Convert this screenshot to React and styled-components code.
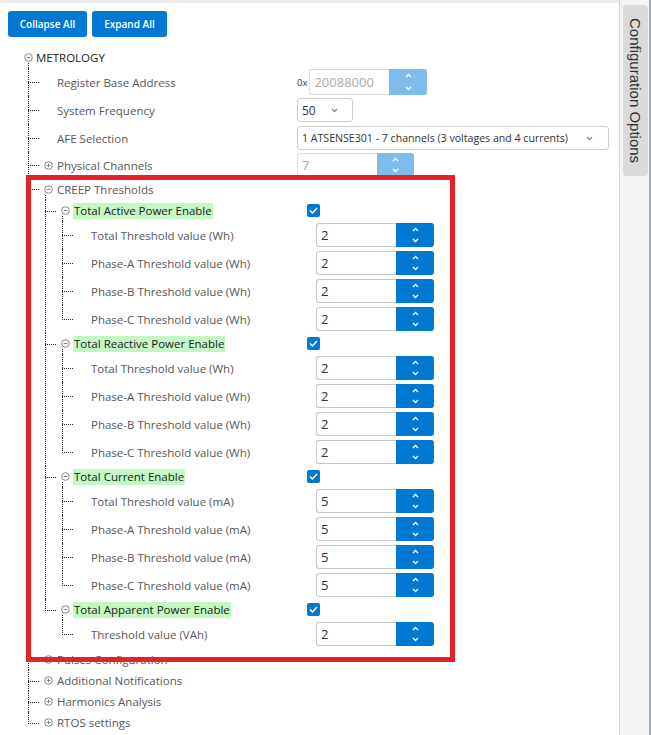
import React from "react";
import styled, { createGlobalStyle } from "styled-components";

const GlobalStyle = createGlobalStyle`
  html, body {
    margin: 0;
    padding: 0;
    height: 100%;
    overflow: hidden;
    background: #fff;
  }
  body {
    font-family: "Open Sans", "Noto Sans", sans-serif;
  }
  * {
    box-sizing: border-box;
  }
`;

const Page = styled.div`
  position: relative;
  display: flex;
  width: 651px;
  height: 735px;
`;

const Main = styled.div`
  flex: 1;
  border-top: 3px solid #ececec;
  padding: 8px 0 0 8px;
`;

const Toolbar = styled.div`
  display: flex;
  gap: 5px;
`;

const ToolButton = styled.button`
  width: ${(p) => p.$w}px;
  height: 26px;
  border: none;
  border-radius: 3px;
  background-color: #0078d4;
  color: #fff;
  font-family: "Open Sans", sans-serif;
  font-size: 10px;
  font-weight: 600;
  padding: 0;
`;

const SidePanel = styled.div`
  width: 32px;
  flex: none;
  background-color: #f4f4f4;
  border-left: 1px solid #d6d6d6;
  border-right: 2px solid #9db2c7;
  padding: 5px 0 0 3px;
`;

const SideTab = styled.div`
  width: 25px;
  height: 171px;
  border-radius: 4px;
  background-color: #dadada;
  writing-mode: vertical-rl;
  display: flex;
  align-items: center;
  justify-content: center;
  font-family: "Liberation Sans", Arial, sans-serif;
  font-size: 15px;
  color: #333;
`;

const Tree = styled.div`
  margin-top: 9px;
  padding-left: 16px;
`;

const RootRow = styled.div`
  display: flex;
  align-items: center;
  gap: 3px;
  height: 22px;
  font-size: 11.5px;
  color: #1a1a1a;
`;

const Branch = styled.ul`
  position: relative;
  list-style: none;
  margin: 0 0 0 ${(p) => p.$indent}px;
  padding: 0;

  &::before {
    content: "";
    position: absolute;
    left: 0;
    top: -5px;
    height: 5px;
    border-left: 1px dotted #222;
  }
`;

const Item = styled.li`
  position: relative;

  &::before {
    content: "";
    position: absolute;
    left: 0;
    top: ${(p) => p.$h / 2}px;
    width: 11px;
    border-top: 1px dotted #222;
  }

  &::after {
    content: "";
    position: absolute;
    left: 0;
    top: 0;
    bottom: 0;
    border-left: 1px dotted #222;
  }

  &:last-child::after {
    bottom: auto;
    height: ${(p) => p.$h / 2 + 1}px;
  }
`;

const Row = styled.div`
  display: flex;
  align-items: center;
  height: ${(p) => p.$h}px;
  padding-left: 16px;
`;

const ToggleBox = styled.span`
  width: 9px;
  height: 9px;
  flex: none;
  margin-right: 4px;
  display: flex;
`;

const Label = styled.span`
  width: ${(p) => p.$w}px;
  flex: none;
  font-size: 11.5px;
  color: #575757;
  white-space: nowrap;
`;

const Highlight = styled.span`
  display: inline-block;
  background-color: #c4f7c4;
  color: #1a1a1a;
  line-height: 16px;
  padding: 0 1px;
  margin-left: -1px;
`;

const Prefix = styled.span`
  font-size: 9.5px;
  color: #333;
  margin-right: 2px;
`;

const Spin = styled.div`
  display: flex;
  height: ${(p) => p.$h}px;
`;

const Field = styled.div`
  width: ${(p) => p.$w}px;
  height: 100%;
  border: 1px solid ${(p) => (p.$disabled ? "#dcdcdc" : "#c8c8c8")};
  border-right: none;
  border-radius: 3px 0 0 3px;
  display: flex;
  align-items: center;
  padding-left: 4px;
  font-size: 13px;
  color: ${(p) => (p.$disabled ? "#aaa" : "#333")};
  background: #fff;
`;

const Arrows = styled.div`
  width: ${(p) => p.$w}px;
  height: 100%;
  border-radius: 0 3px 3px 0;
  background-color: ${(p) => (p.$disabled ? "#7fbbeb" : "#0078d4")};
  display: flex;
  flex-direction: column;
  align-items: center;
  justify-content: space-between;
  padding: 4px 0 4px;
`;

const SelectBox = styled.div`
  width: ${(p) => p.$w}px;
  height: 24px;
  border: 1px solid #cfcfcf;
  border-radius: 3px;
  display: flex;
  align-items: center;
  justify-content: space-between;
  padding: 0 ${(p) => p.$pr}px 0 4px;
  font-size: ${(p) => p.$fs}px;
  color: #333;
  white-space: nowrap;
`;

const Check = styled.span`
  width: 13px;
  height: 13px;
  border-radius: 2px;
  background-color: #0078d4;
  display: flex;
  align-items: center;
  justify-content: center;
`;

const RedFrame = styled.div`
  position: absolute;
  left: 26px;
  top: 175px;
  width: 429px;
  height: 487px;
  border: 5px solid #e52129;
  pointer-events: none;
`;

const ToggleIcon = ({ open }) => (
  <svg width="9" height="9" viewBox="0 0 9 9">
    <circle cx="4.5" cy="4.5" r="3.8" fill="none" stroke="#777" strokeWidth="0.9" />
    <line x1="2.6" y1="4.5" x2="6.4" y2="4.5" stroke="#777" strokeWidth="0.9" />
    {!open && <line x1="4.5" y1="2.6" x2="4.5" y2="6.4" stroke="#777" strokeWidth="0.9" />}
  </svg>
);

const Chevron = ({ up, color = "#fff", w = 7 }) => (
  <svg width={w} height="5" viewBox="0 0 7 5">
    <polyline
      points={up ? "1,4 3.5,1.5 6,4" : "1,1 3.5,3.5 6,1"}
      fill="none"
      stroke={color}
      strokeWidth="1.3"
    />
  </svg>
);

const NumberInput = ({ value, disabled, h = 24, fw = 80, aw = 38 }) => (
  <Spin $h={h}>
    <Field $w={fw} $disabled={disabled}>{value}</Field>
    <Arrows $w={aw} $disabled={disabled}>
      <Chevron up />
      <Chevron />
    </Arrows>
  </Spin>
);

const Control = ({ c }) => {
  if (!c) return null;
  if (c.type === "hex")
    return (
      <>
        <Prefix>0x</Prefix>
        <NumberInput value={c.value} disabled h={26} />
      </>
    );
  if (c.type === "select")
    return (
      <SelectBox $w={c.width} $pr={c.pr} $fs={c.fs}>
        <span>{c.value}</span>
        <Chevron color="#888" />
      </SelectBox>
    );
  if (c.type === "check")
    return (
      <Check>
        <svg width="9" height="7" viewBox="0 0 9 7">
          <polyline points="1,3.6 3.4,6 8,1" fill="none" stroke="#fff" strokeWidth="1.4" />
        </svg>
      </Check>
    );
  return <NumberInput value={c.value} disabled={c.disabled} aw={c.aw} />;
};

const labelWidth = (level) => [240, 233, 225][level - 1];

const group = (title, unit, value, h = 21) => ({
  label: title,
  h,
  toggle: "open",
  highlight: true,
  control: { type: "check" },
  children: [
    { label: `Total Threshold value (${unit})`, h: 28, control: { type: "number", value } },
    { label: `Phase-A Threshold value (${unit})`, h: 28, control: { type: "number", value } },
    { label: `Phase-B Threshold value (${unit})`, h: 28, control: { type: "number", value } },
    { label: `Phase-C Threshold value (${unit})`, h: 28, control: { type: "number", value } },
  ],
});

const tree = [
  { label: "Register Base Address", h: 28, control: { type: "hex", value: "20088000" } },
  { label: "System Frequency", h: 28, control: { type: "select", value: "50", width: 56, pr: 14, fs: 12 } },
  {
    label: "AFE Selection",
    h: 28,
    control: {
      type: "select",
      value: "1 ATSENSE301 - 7 channels (3 voltages and 4 currents)",
      width: 312,
      pr: 15,
      fs: 10.6,
    },
  },
  { label: "Physical Channels", h: 26, toggle: "closed", control: { type: "number", value: "7", disabled: true, aw: 37 } },
  {
    label: "CREEP Thresholds",
    h: 22,
    toggle: "open",
    children: [
      group("Total Active Power Enable", "Wh", "2"),
      group("Total Reactive Power Enable", "Wh", "2"),
      group("Total Current Enable", "mA", "5"),
      {
        label: "Total Apparent Power Enable",
        h: 21,
        toggle: "open",
        highlight: true,
        control: { type: "check" },
        children: [{ label: "Threshold value (VAh)", h: 28, control: { type: "number", value: "2" } }],
      },
    ],
  },
  { label: "Pulses Configuration", h: 22, toggle: "closed" },
  { label: "Additional Notifications", h: 21, toggle: "closed" },
  { label: "Harmonics Analysis", h: 21, toggle: "closed" },
  { label: "RTOS settings", h: 21, toggle: "closed" },
];

const Nodes = ({ items, level, indent }) => (
  <Branch $indent={indent}>
    {items.map((n) => (
      <Item key={n.label} $h={n.h}>
        <Row $h={n.h}>
          <ToggleBox>{n.toggle && <ToggleIcon open={n.toggle === "open"} />}</ToggleBox>
          <Label $w={labelWidth(level)}>
            {n.highlight ? <Highlight>{n.label}</Highlight> : n.label}
          </Label>
          <Control c={n.control} />
        </Row>
        {n.children && <Nodes items={n.children} level={level + 1} indent={17} />}
      </Item>
    ))}
  </Branch>
);

export default function App() {
  return (
    <>
      <GlobalStyle />
      <Page>
        <Main>
          <Toolbar>
            <ToolButton $w={79}>Collapse All</ToolButton>
            <ToolButton $w={75}>Expand All</ToolButton>
          </Toolbar>
          <Tree>
            <RootRow>
              <ToggleIcon open />
              <span>METROLOGY</span>
            </RootRow>
            <Nodes items={tree} level={1} indent={4} />
          </Tree>
        </Main>
        <SidePanel>
          <SideTab>Configuration Options</SideTab>
        </SidePanel>
        <RedFrame />
      </Page>
    </>
  );
}
